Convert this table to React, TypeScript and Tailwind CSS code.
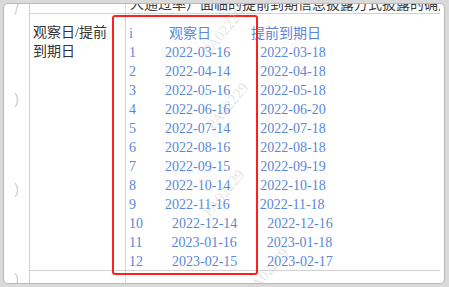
const rows: Array<[string, string, string]> = [
  ['1', '2022-03-16', '2022-03-18'],
  ['2', '2022-04-14', '2022-04-18'],
  ['3', '2022-05-16', '2022-05-18'],
  ['4', '2022-06-16', '2022-06-20'],
  ['5', '2022-07-14', '2022-07-18'],
  ['6', '2022-08-16', '2022-08-18'],
  ['7', '2022-09-15', '2022-09-19'],
  ['8', '2022-10-14', '2022-10-18'],
  ['9', '2022-11-16', '2022-11-18'],
  ['10', '2022-12-14', '2022-12-16'],
  ['11', '2023-01-16', '2023-01-18'],
  ['12', '2023-02-15', '2023-02-17'],
]

const font = "font-['Liberation_Serif','Noto_Sans_CJK_SC',serif]"

function Watermark({ className }: { className: string }) {
  return (
    <span
      className={`absolute text-[15px] text-[#c4c4c4]/45 whitespace-nowrap -rotate-[50deg] pointer-events-none ${font} ${className}`}
    >
      PA02229
    </span>
  )
}

export default function App() {
  return (
    <div className="relative w-[449px] h-[287px] bg-[#dadada] pt-[3px] pl-[3px] overflow-hidden">
      <div className="w-[442px] h-[281px] bg-white border border-[#b9b9b9] rounded-[5px] overflow-hidden flex">
        {/* left gutter with clipped marks */}
        <div className="w-[25px] flex flex-col items-center gap-[69px] text-[#cdcdcd] text-[14px] leading-[19px] font-['Liberation_Sans',sans-serif]">
          <span className="-mt-[3px]">/</span>
          <span className="mt-[1px]">)</span>
          <span className="mt-[2px]">)</span>
          <span className="mt-[2px]">)</span>
        </div>

        <div className={`w-[411px] flex flex-col border-l border-[#d2d2d2] ${font}`}>
          {/* clipped line above */}
          <div className="h-[10px] flex border-b border-[#d2d2d2]">
            <div className="w-[96px] border-r border-[#dedede]" />
            <div className="flex-1 flex items-end overflow-hidden pl-[4px]">
              <span className="text-[14px] leading-[17px] text-[#3a3a3a] whitespace-nowrap">
                人通过率）面临的提前到期信息披露方式披露的确定方式
              </span>
            </div>
          </div>

          <div className="h-[257px] flex border-b border-[#d2d2d2]">
            <div className="w-[96px] border-r border-[#d2d2d2] pl-[3px] pt-[9px] text-[14px] leading-[19px] text-[#333]">
              <div>观察日/提前</div>
              <div>到期日</div>
            </div>
            <div className="flex-1 pl-[3px] pt-[10px] text-[14px] leading-[19px] text-[#5a87d8]">
              <div className="flex whitespace-nowrap">
                <span>i</span>
                <span className="ml-[36px]">观察日</span>
                <span className="ml-[40px]">提前到期日</span>
              </div>
              {rows.map(([n, a, b]) => (
                <div key={n} className="flex whitespace-nowrap">
                  <span>{n}</span>
                  <span className="ml-[29px]">{a}</span>
                  <span className="ml-[30px]">{b}</span>
                </div>
              ))}
            </div>
          </div>

          <div className="flex-1 flex">
            <div className="w-[96px] border-r border-[#dedede]" />
          </div>
        </div>
      </div>

      {/* red annotation box */}
      <div className="absolute left-[112px] top-[15px] w-[146px] h-[260px] border-2 border-[#ff1f1f] rounded-[3px] pointer-events-none" />

      <Watermark className="left-[196px] top-[20px]" />
      <Watermark className="left-[200px] top-[95px]" />
      <Watermark className="left-[196px] top-[182px]" />
      <Watermark className="left-[240px] top-[260px]" />
    </div>
  )
}
